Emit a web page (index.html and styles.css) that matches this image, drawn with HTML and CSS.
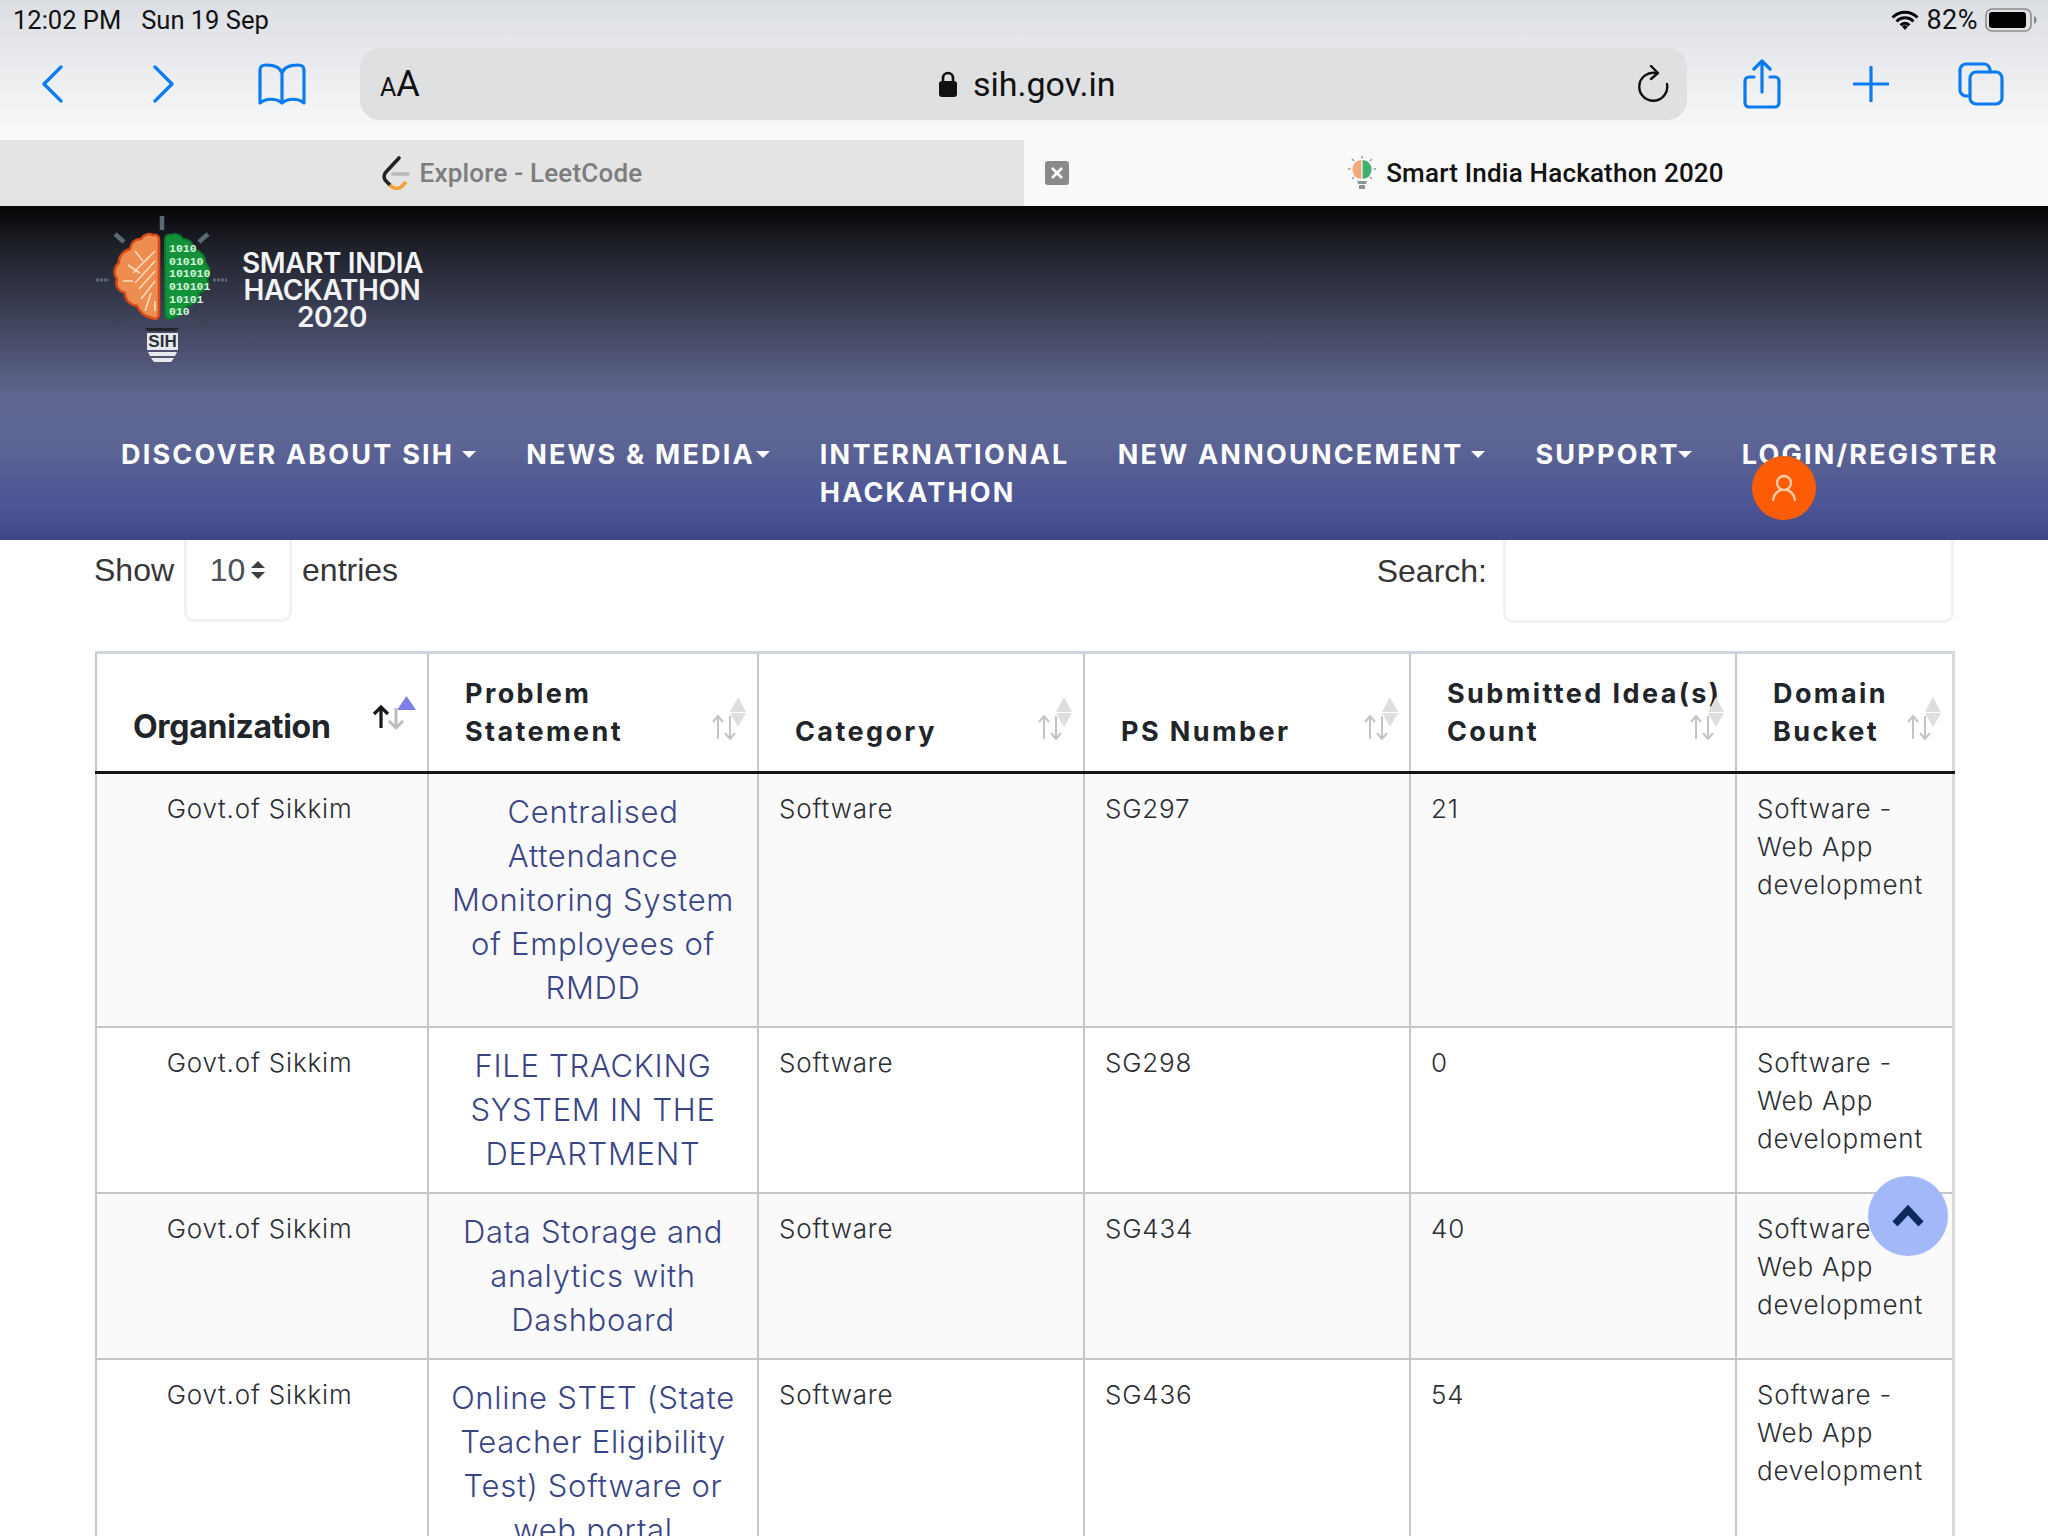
FILE: index.html
```html
<!DOCTYPE html>
<html lang="en">
<head>
<meta charset="utf-8">
<title>Smart India Hackathon 2020</title>
<link rel="stylesheet" href="styles.css">
</head>
<body>
<div class="screen">
  <div class="chrome">
    <div class="status">
      <span class="status-time">12:02 PM</span>
      <span class="status-date">Sun 19 Sep</span>
      <span class="status-right">
        <svg class="wifi" viewBox="0 0 28 20" width="28" height="20"><path d="M1.5 7.5a17.5 17.5 0 0 1 25 0M5.6 11.5a11.5 11.5 0 0 1 16.8 0M9.6 15.3a5.8 5.8 0 0 1 8.8 0" fill="none" stroke="#000" stroke-width="3"/><path d="M14 20l-3-3.4a4 4 0 0 1 6 0z"/></svg>
        <span class="batt-text">82%</span>
        <svg class="battery" viewBox="0 0 52 24" width="52" height="24"><rect x="1" y="1" width="45" height="22" rx="6" fill="none" stroke="#8a8a8a" stroke-width="1.6"/><rect x="4" y="4" width="37" height="16" rx="3"/><path d="M49 8c2 1 2.6 2.4 2.6 4s-.6 3-2.6 4z" fill="#8a8a8a"/></svg>
      </span>
    </div>
    <div class="toolbar">
      <div class="tool-group">
        <svg class="ic ic-back" viewBox="0 0 22 38" width="22" height="38"><path d="M20 2 3 19l17 17" /></svg>
        <svg class="ic ic-fwd" viewBox="0 0 22 38" width="22" height="38"><path d="M2 2l17 17L2 36" /></svg>
        <svg class="ic ic-book" viewBox="0 0 48 42" width="48" height="42"><path d="M24 10C22 4 15 2 8 2 4 2 2 4 2 7v33c6-5 16-5 22 0 6-5 16-5 22 0V7c0-3-2-5-6-5-7 0-14 2-16 8zM24 10v30"/></svg>
      </div>
      <div class="urlbar">
        <span class="aa"><small>A</small>A</span>
        <span class="url"><svg class="lock" viewBox="0 0 20 28" width="20" height="28"><path d="M5 12V8a5 5 0 0 1 10 0v4" fill="none" stroke="#111" stroke-width="2.6"/><rect x="1" y="11" width="18" height="16" rx="3" fill="#111"/></svg>sih.gov.in</span>
        <svg class="reload" viewBox="0 0 32 38" width="32" height="38"><path d="M19 8a14 14 0 1 0 11 11" fill="none" stroke="#111" stroke-width="2.4" stroke-linecap="round"/><path d="M14 1l7 7-7 6" fill="none" stroke="#111" stroke-width="2.4" stroke-linecap="round" stroke-linejoin="round"/></svg>
      </div>
      <div class="tool-group tool-right">
        <svg class="ic ic-share" viewBox="0 0 38 50" width="38" height="50"><path d="M11 18H6a4 4 0 0 0-4 4v22a4 4 0 0 0 4 4h26a4 4 0 0 0 4-4V22a4 4 0 0 0-4-4h-5M19 33V2M11 10l8-8 8 8"/></svg>
        <svg class="ic ic-plus" viewBox="0 0 36 36" width="36" height="36"><path d="M18 1v34M1 18h34"/></svg>
        <svg class="ic ic-tabs" viewBox="0 0 46 44" width="46" height="44"><path d="M10 34H8a6 6 0 0 1-6-6V8a6 6 0 0 1 6-6h18a6 6 0 0 1 6 6v2"/><rect x="12" y="10" width="32" height="32" rx="6"/></svg>
      </div>
    </div>
    <div class="tabs">
      <div class="tab tab-off">
        <svg class="fav" viewBox="0 0 28 34" width="28" height="34"><path d="M17 2 4 16c-3 3-2 7 0 9l4 4" fill="none" stroke="#222" stroke-width="3.6" stroke-linecap="round"/><path d="M9 30c3 3 7 3 10 1l4-4" fill="none" stroke="#f0a030" stroke-width="3.6" stroke-linecap="round"/><path d="M11 18h15" stroke="#b8b8b8" stroke-width="3.6" stroke-linecap="round"/></svg>
        <span>Explore - LeetCode</span>
      </div>
      <div class="tab tab-on">
        <span class="close"><svg viewBox="0 0 24 24" width="24" height="24"><path d="M7 7l10 10M17 7 7 17" stroke="#fff" stroke-width="2.6"/></svg></span>
        <svg class="fav" viewBox="0 0 28 34" width="28" height="34"><path d="M13.4 4a9 9.5 0 0 0 0 19z" fill="#f2a77a"/><path d="M14.6 4a9 9.5 0 0 1 0 19z" fill="#3fae6e"/><path d="M9 25h10l-1 3h-8zM11 29h6v4h-6z" fill="#8a949c"/><path d="M14 0v2.5M4 3l2 2M24 3l-2 2M0 13h2.5M25.500 13H28M4 23l2-2M24 23l-2-2" stroke="#8f9a9c" stroke-width="1.4"/></svg>
        <span>Smart India Hackathon 2020</span>
      </div>
    </div>
  </div>

  <header class="site-header">
    <div class="brand">
      <svg class="bulb" viewBox="0 0 132 148" width="132" height="148">
        <path d="M67 1v14M20 19l9 8M113 19l-9 8" stroke="#5a6a72" stroke-width="4.500"/>
        <path d="M1 65h13M118 65h14" stroke="#5a6a72" stroke-width="3" stroke-dasharray="3 1"/>
        <path d="M20 111l10-10M113 111l-10-10" stroke="#3d4650" stroke-width="2"/>
        <path d="M64 24c0-3-3-5-6-4c-4-2-9-1-12 4c-6 0-10 4-11 10c-7 2-12 8-11 14c-5 4-6 11-2 16c-2 6 1 12 8 14c0 7 5 12 12 13c3 7 9 11 15 12c3 2 7 1 7-4z" fill="#ee8d50" stroke="#d8481a" stroke-width="2.500"/>
        <path d="M60 36 38 58M60 46 40 68M60 56 44 74M60 66 46 84M56 78 50 96M33 50l12 8M40 36l8 10M28 66h10M60 86v10" stroke="#fbdcc4" stroke-width="1.600" fill="none"/>
        <path d="M70 24c0-3 3-5 6-4c4-2 9-1 12 4c6 0 10 4 11 10c7 2 12 8 11 14c5 4 6 11 2 16c2 6-1 12-8 14c0 7-5 12-12 13c-3 7-9 11-15 12c-3 2-7 1-7-4z" fill="#14923a" stroke="#0c7a2d" stroke-width="2"/>
        <text class="bits" x="74" y="37">1010</text>
        <text class="bits" x="74" y="50">01010</text>
        <text class="bits" x="74" y="62">101010</text>
        <text class="bits" x="74" y="75">010101</text>
        <text class="bits" x="74" y="88">10101</text>
        <text class="bits" x="74" y="100">010</text>
        <path d="M50 113h34l-3 3H53z" fill="#20252c"/>
        <rect x="52" y="118" width="31" height="17" fill="#e6e8ec"/>
        <path d="M53 137h29l-2 4H55zM56 143h23l-3 4H59z" fill="#e6e8ec"/>
        <text class="bulb-text" x="67.500" y="132" text-anchor="middle">SIH</text>
      </svg>
      <div class="brand-name">SMART INDIA<br>HACKATHON<br>2020</div>
    </div>
    <nav class="nav">
      <a class="nav-item nav-caret">DISCOVER ABOUT SIH</a>
      <a class="nav-item nav-caret nav-news">NEWS &amp; MEDIA</a>
      <a class="nav-item nav-wrap">INTERNATIONAL HACKATHON</a>
      <a class="nav-item nav-caret">NEW ANNOUNCEMENT</a>
      <a class="nav-item nav-caret nav-tight">SUPPORT</a>
      <a class="nav-item nav-login">LOGIN/REGISTER
        <span class="login-badge"><svg viewBox="0 0 26 28" width="26" height="28"><circle cx="13" cy="9" r="7" fill="none" stroke="#ffc9a8" stroke-width="2.4"/><path d="M2 26c1-6 5-9 8-10M24 26c-1-6-5-9-8-10" fill="none" stroke="#ffc9a8" stroke-width="2.4" stroke-linecap="round"/></svg></span>
      </a>
    </nav>
  </header>

  <main class="content">
    <div class="controls">
      <label class="length">Show
        <span class="select">10<svg viewBox="0 0 16 20" width="16" height="20"><path d="M8 1l7 7H1zM8 19l7-7H1z" fill="#3c4146"/></svg></span>
        entries</label>
      <label class="search">Search:<span class="search-box"></span></label>
    </div>
    <table class="grid">
      <colgroup>
        <col class="c1"><col class="c2"><col class="c3"><col class="c4"><col class="c5"><col class="c6">
      </colgroup>
      <thead>
        <tr>
          <th class="th-org">Organization
            <svg class="sort" viewBox="0 0 46 44" width="46" height="44"><path d="M34.500 0 44 14H25z" fill="#7c80e6"/><path d="M24 12v20M17 25l7 7 7-7" fill="none" stroke="#bdbdbd" stroke-width="3"/><path d="M9 32V11M2 18l7-7 7 7" fill="none" stroke="#16181c" stroke-width="3.200"/></svg>
          </th>
          <th>Problem Statement<svg class="sort" viewBox="0 0 40 44" width="40" height="44"><path d="M30 1l8 15H22z" fill="#dedede"/><path d="M22 17h16l-8 14z" fill="#dedede"/><path d="M10 43V20M5 26l5-6 5 6M22 20v23M17 37l5 6 5-6" fill="none" stroke="#c4c4c4" stroke-width="2"/></svg></th>
          <th>Category<svg class="sort" viewBox="0 0 40 44" width="40" height="44"><path d="M30 1l8 15H22z" fill="#dedede"/><path d="M22 17h16l-8 14z" fill="#dedede"/><path d="M10 43V20M5 26l5-6 5 6M22 20v23M17 37l5 6 5-6" fill="none" stroke="#c4c4c4" stroke-width="2"/></svg></th>
          <th>PS Number<svg class="sort" viewBox="0 0 40 44" width="40" height="44"><path d="M30 1l8 15H22z" fill="#dedede"/><path d="M22 17h16l-8 14z" fill="#dedede"/><path d="M10 43V20M5 26l5-6 5 6M22 20v23M17 37l5 6 5-6" fill="none" stroke="#c4c4c4" stroke-width="2"/></svg></th>
          <th>Submitted Idea(s) Count<svg class="sort" viewBox="0 0 40 44" width="40" height="44"><path d="M30 1l8 15H22z" fill="#dedede"/><path d="M22 17h16l-8 14z" fill="#dedede"/><path d="M10 43V20M5 26l5-6 5 6M22 20v23M17 37l5 6 5-6" fill="none" stroke="#c4c4c4" stroke-width="2"/></svg></th>
          <th>Domain Bucket<svg class="sort" viewBox="0 0 40 44" width="40" height="44"><path d="M30 1l8 15H22z" fill="#dedede"/><path d="M22 17h16l-8 14z" fill="#dedede"/><path d="M10 43V20M5 26l5-6 5 6M22 20v23M17 37l5 6 5-6" fill="none" stroke="#c4c4c4" stroke-width="2"/></svg></th>
        </tr>
      </thead>
      <tbody>
        <tr>
          <td class="td-org">Govt.of Sikkim</td>
          <td class="td-link"><a>Centralised Attendance Monitoring System of Employees of RMDD</a></td>
          <td>Software</td><td>SG297</td><td>21</td><td>Software - Web App development</td>
        </tr>
        <tr>
          <td class="td-org">Govt.of Sikkim</td>
          <td class="td-link"><a>FILE TRACKING SYSTEM IN THE DEPARTMENT</a></td>
          <td>Software</td><td>SG298</td><td>0</td><td>Software - Web App development</td>
        </tr>
        <tr>
          <td class="td-org">Govt.of Sikkim</td>
          <td class="td-link"><a>Data Storage and analytics with Dashboard</a></td>
          <td>Software</td><td>SG434</td><td>40</td><td>Software - Web App development</td>
        </tr>
        <tr>
          <td class="td-org">Govt.of Sikkim</td>
          <td class="td-link"><a>Online STET (State Teacher Eligibility Test) Software or web portal</a></td>
          <td>Software</td><td>SG436</td><td>54</td><td>Software - Web App development</td>
        </tr>
      </tbody>
    </table>
  </main>

  <a class="to-top"><svg viewBox="0 0 34 24" width="34" height="24"><path d="M4 20 17 6l13 14" fill="none" stroke="#0b2a5b" stroke-width="7"/></svg></a>
</div>
</body>
</html>
```

FILE: styles.css
```css
* { box-sizing: border-box; }
html, body { margin: 0; padding: 0; }
body { background: #fff; font-family: "Inter", "Liberation Sans", sans-serif; color: #212529; }
.screen { position: relative; width: 2048px; height: 1536px; overflow: hidden; }

/* Safari chrome */
.chrome { height: 206px; background: linear-gradient(#dbdee3, #fafafa 140px); font-family: "Roboto", "Liberation Sans", sans-serif; color: #111; }
.status { height: 40px; display: flex; align-items: center; padding: 0 11px 0 13px; font-size: 25.5px; gap: 20px; }
.status-right { margin-left: auto; display: flex; align-items: center; gap: 7px; }
.batt-text { font-size: 27px; letter-spacing: .5px; }
.toolbar { height: 100px; display: flex; align-items: flex-start; padding-top: 8px; }
.tool-group { display: flex; align-items: center; height: 72px; width: 360px; flex: none; padding-left: 41px; }
.ic { fill: none; stroke: #0a7cf0; stroke-width: 3.2; stroke-linecap: round; stroke-linejoin: round; flex: none; }
.ic-fwd { margin-left: 90px; }
.ic-book { margin-left: 83px; }
.urlbar { width: 1327px; height: 72px; flex: none; background: #dfe0e2; border-radius: 20px; display: flex; align-items: center; position: relative; padding: 0 18px 0 20px; }
.aa { font-size: 36px; width: 42px; }
.aa small { font-size: 25px; }
.url { position: absolute; left: 578px; display: flex; align-items: center; gap: 15px; font-size: 34px; }
.reload { margin-left: auto; }
.tool-right { width: 361px; padding-left: 56px; }
.ic-plus { margin-left: 72px; }
.ic-tabs { margin-left: 69px; }
.tabs { height: 66px; display: flex; font-size: 26px; letter-spacing: .2px; }
.tab { width: 1024px; display: flex; align-items: center; justify-content: center; gap: 10px; position: relative; }
.tab-off { background: #e4e4e4; color: #7d7d7d; font-weight: 500; }
.tab-on { background: #f9f9f9; color: #111; font-weight: 500; }
.close { position: absolute; left: 21px; top: 21px; width: 24px; height: 24px; background: #8a8a8a; border-radius: 3px; display: flex; }

/* Site header */
.site-header { height: 334px; background: linear-gradient(#050507 0, #1e2028 40px, #3d4158 110px, #5f6690 190px, #5c6494 240px, #4b5595 300px, #3e4889 334px); padding: 9px 0 0 95px; position: relative; z-index: 2; }
.brand { display: flex; align-items: flex-start; height: 148px; }
.bulb-text { font: 700 17px "Liberation Sans", sans-serif; fill: #2a3038; }
.bits { font: 700 11.5px "Liberation Mono", monospace; fill: #d8f5de; }
.brand-name { margin: 35px 0 0 15px; width: 180px; text-align: center; white-space: nowrap; color: #f2f3f6; font-family: "Inter", sans-serif; font-size: 28px; font-weight: 600; line-height: 27px; letter-spacing: -.4px; }
.nav { display: flex; align-items: flex-start; padding: 73px 0 0 26px; gap: 50px; color: #fff; font-size: 27px; font-weight: 700; line-height: 38px; letter-spacing: 2.2px; white-space: nowrap; }
.nav-item { position: relative; }
.nav-caret::after { content: ""; display: inline-block; margin-left: 8px; border: 7px solid transparent; border-top: 7px solid #fff; border-bottom: 0; vertical-align: 6px; }
.nav-news::after { margin-left: 1px; }
.nav-tight::after { margin-left: -2px; }
.nav-wrap { white-space: normal; width: 248px; }
.login-badge { position: absolute; left: 10px; top: 20px; width: 64px; height: 64px; border-radius: 50%; background: #fb5c05; display: flex; align-items: center; justify-content: center; }

/* Data table area */
.content { padding: 0 94px 0 95px; }
.controls { display: flex; justify-content: space-between; align-items: flex-start; height: 111px; font-family: "Liberation Sans", sans-serif; font-size: 32px; color: #363636; }
.length { display: flex; align-items: center; height: 60px; margin-left: -1px; }
.select { width: 108px; height: 104px; flex: none; margin: 0 10px; border: 3px solid #f1f1f1; border-radius: 10px; display: flex; align-items: center; justify-content: center; gap: 5px; color: #495057; }
.search { display: flex; align-items: center; height: 62px; gap: 16px; }
.search-box { display: block; width: 451px; height: 104px; flex: none; border: 3px solid #f1f1f1; border-radius: 10px; }

.grid { width: 1857px; table-layout: fixed; border-collapse: collapse; font-size: 26px; line-height: 38px; border-top: 3px solid #d2d4dc; border-left: 2px solid #c4c6cc; border-right: 3px solid #d8dae2; }
.c1 { width: 332px; } .c2 { width: 330px; } .c3 { width: 326px; } .c4 { width: 326px; } .c5 { width: 326px; } .c6 { width: 217px; }
th { position: relative; height: 120px; padding: 0 6px 20px 36px; vertical-align: bottom; text-align: left; font-size: 27px; font-weight: 700; line-height: 38px; letter-spacing: 2.4px; border-right: 2px solid #c4c6cc; border-bottom: 3px solid #14161a; }
th:last-child { border-right: 0; padding-right: 16px; }
.th-org { font-size: 32px; letter-spacing: -.3px; padding-bottom: 25px; }
.sort { position: absolute; right: 9px; bottom: 31px; }
td { vertical-align: top; padding: 16px 14px 16px 20px; border-right: 2px solid #c4c6cc; border-bottom: 2px solid #c4c6cc; font-weight: 300; letter-spacing: .8px; color: #2b2e33; }
td:last-child { border-right: 0; }
tbody tr:nth-child(odd) td { background: #fafafa; }
.td-org { text-align: center; padding-left: 15px; padding-right: 20px; }
.td-link { text-align: center; font-size: 31px; line-height: 44px; letter-spacing: .7px; padding: 16px 14px; }
.td-link a { color: #3a4585; }

.to-top { position: absolute; left: 1868px; top: 1176px; width: 80px; height: 80px; border-radius: 50%; background: #a3b7fb; display: flex; align-items: center; justify-content: center; z-index: 3; }
```
